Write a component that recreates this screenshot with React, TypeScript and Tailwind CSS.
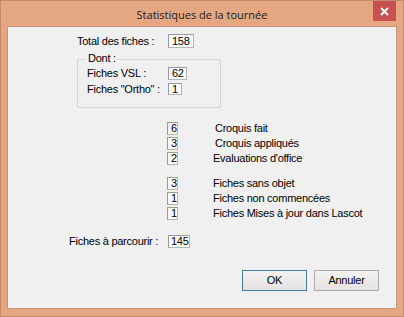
import React from "react";

const Box = ({ v, w, h = 13, pl = 3 }: { v: string; w: number; h?: number; pl?: number }) => (
  <div
    className="flex items-center bg-[#fbfbfb] border border-[#b5b5b5] border-t-[#9a9a9a] border-l-[#9a9a9a] text-black leading-none shrink-0 overflow-hidden"
    style={{ width: w, height: h, paddingLeft: pl }}
  >
    {v}
  </div>
);

const RightRow = ({ v, label, lx }: { v: string; label: string; lx: number }) => (
  <div className="flex items-center h-[15px]">
    <div className="w-[159px] shrink-0" />
    <Box v={v} w={11} h={13} />
    <div style={{ marginLeft: lx }} className="leading-none whitespace-nowrap">
      {label}
    </div>
  </div>
);

export default function App() {
  return (
    <div className="w-[404px] h-[317px] bg-[#e5a682] border border-[#c48a6a] flex flex-col overflow-hidden">
      {/* title bar */}
      <div className="relative h-[25px] shrink-0 flex items-center justify-center">
        <span className="text-[11px] text-[#222] mt-[4px]" style={{ fontFamily: '"Open Sans", "Noto Sans", sans-serif' }}>
          Statistiques de la tournée
        </span>
        <div className="absolute right-[7px] top-0 w-[23px] h-[20px] bg-[#c75050] flex items-center justify-center">
          <svg width="9" height="9" viewBox="0 0 9 9">
            <path d="M1 1 L8 8 M8 1 L1 8" stroke="#fff" strokeWidth="1.8" />
          </svg>
        </div>
      </div>
      {/* client */}
      <div
        className="mx-[6px] h-[283px] bg-[#f0f0f0] border border-[#c9927a] text-[11px] tracking-[-0.25px] text-black flex flex-col"
        style={{ fontFamily: '"Liberation Sans", Arial, sans-serif' }}
      >
        {/* total */}
        <div className="flex items-center h-[14px] mt-[7px]">
          <div className="w-[160px] pl-[69px] shrink-0 whitespace-nowrap leading-none">Total des fiches :</div>
          <Box v="158" w={26} h={14} />
        </div>
        {/* group */}
        <div className="relative ml-[69px] mt-[11px] w-[144px] h-[49px] border border-[#d5d5d5] rounded-[2px]">
          <div className="absolute left-[8px] top-[-7px] px-[2px] bg-[#f0f0f0] leading-none">Dont :</div>
          <div className="flex items-center h-[13px] mt-[7px]">
            <div className="w-[90px] pl-[9px] shrink-0 whitespace-nowrap leading-none">Fiches VSL :</div>
            <Box v="62" w={19} h={13} />
          </div>
          <div className="flex items-center h-[12px] mt-[3px]">
            <div className="w-[90px] pl-[9px] shrink-0 whitespace-nowrap leading-none">Fiches "Ortho" :</div>
            <Box v="1" w={14} h={12} />
          </div>
        </div>
        {/* right block 1 */}
        <div className="mt-[13px] flex flex-col">
          <RightRow v="6" label="Croquis fait" lx={37} />
          <RightRow v="3" label="Croquis appliqués" lx={37} />
          <RightRow v="2" label="Evaluations d'office" lx={35} />
        </div>
        <div className="mt-[10px] flex flex-col">
          <RightRow v="3" label="Fiches sans objet" lx={35} />
          <RightRow v="1" label="Fiches non commencées" lx={35} />
          <RightRow v="1" label="Fiches Mises à jour dans Lascot" lx={35} />
        </div>
        {/* parcourir */}
        <div className="flex items-center h-[13px] mt-[14px]">
          <div className="w-[160px] pl-[61px] shrink-0 whitespace-nowrap leading-none">Fiches à parcourir :</div>
          <Box v="145" w={22} h={13} pl={2} />
        </div>
        {/* buttons */}
        <div className="flex mt-[22px] pl-[234px] gap-[7px]">
          <button className="w-[65px] h-[21px] border border-[#3c7fb1] bg-gradient-to-b from-[#f2f2f2] to-[#e3e3e3] text-[11px] leading-none">
            OK
          </button>
          <button className="w-[65px] h-[21px] border border-[#acacac] bg-gradient-to-b from-[#f2f2f2] to-[#e3e3e3] text-[11px] leading-none">
            Annuler
          </button>
        </div>
      </div>
    </div>
  );
}
